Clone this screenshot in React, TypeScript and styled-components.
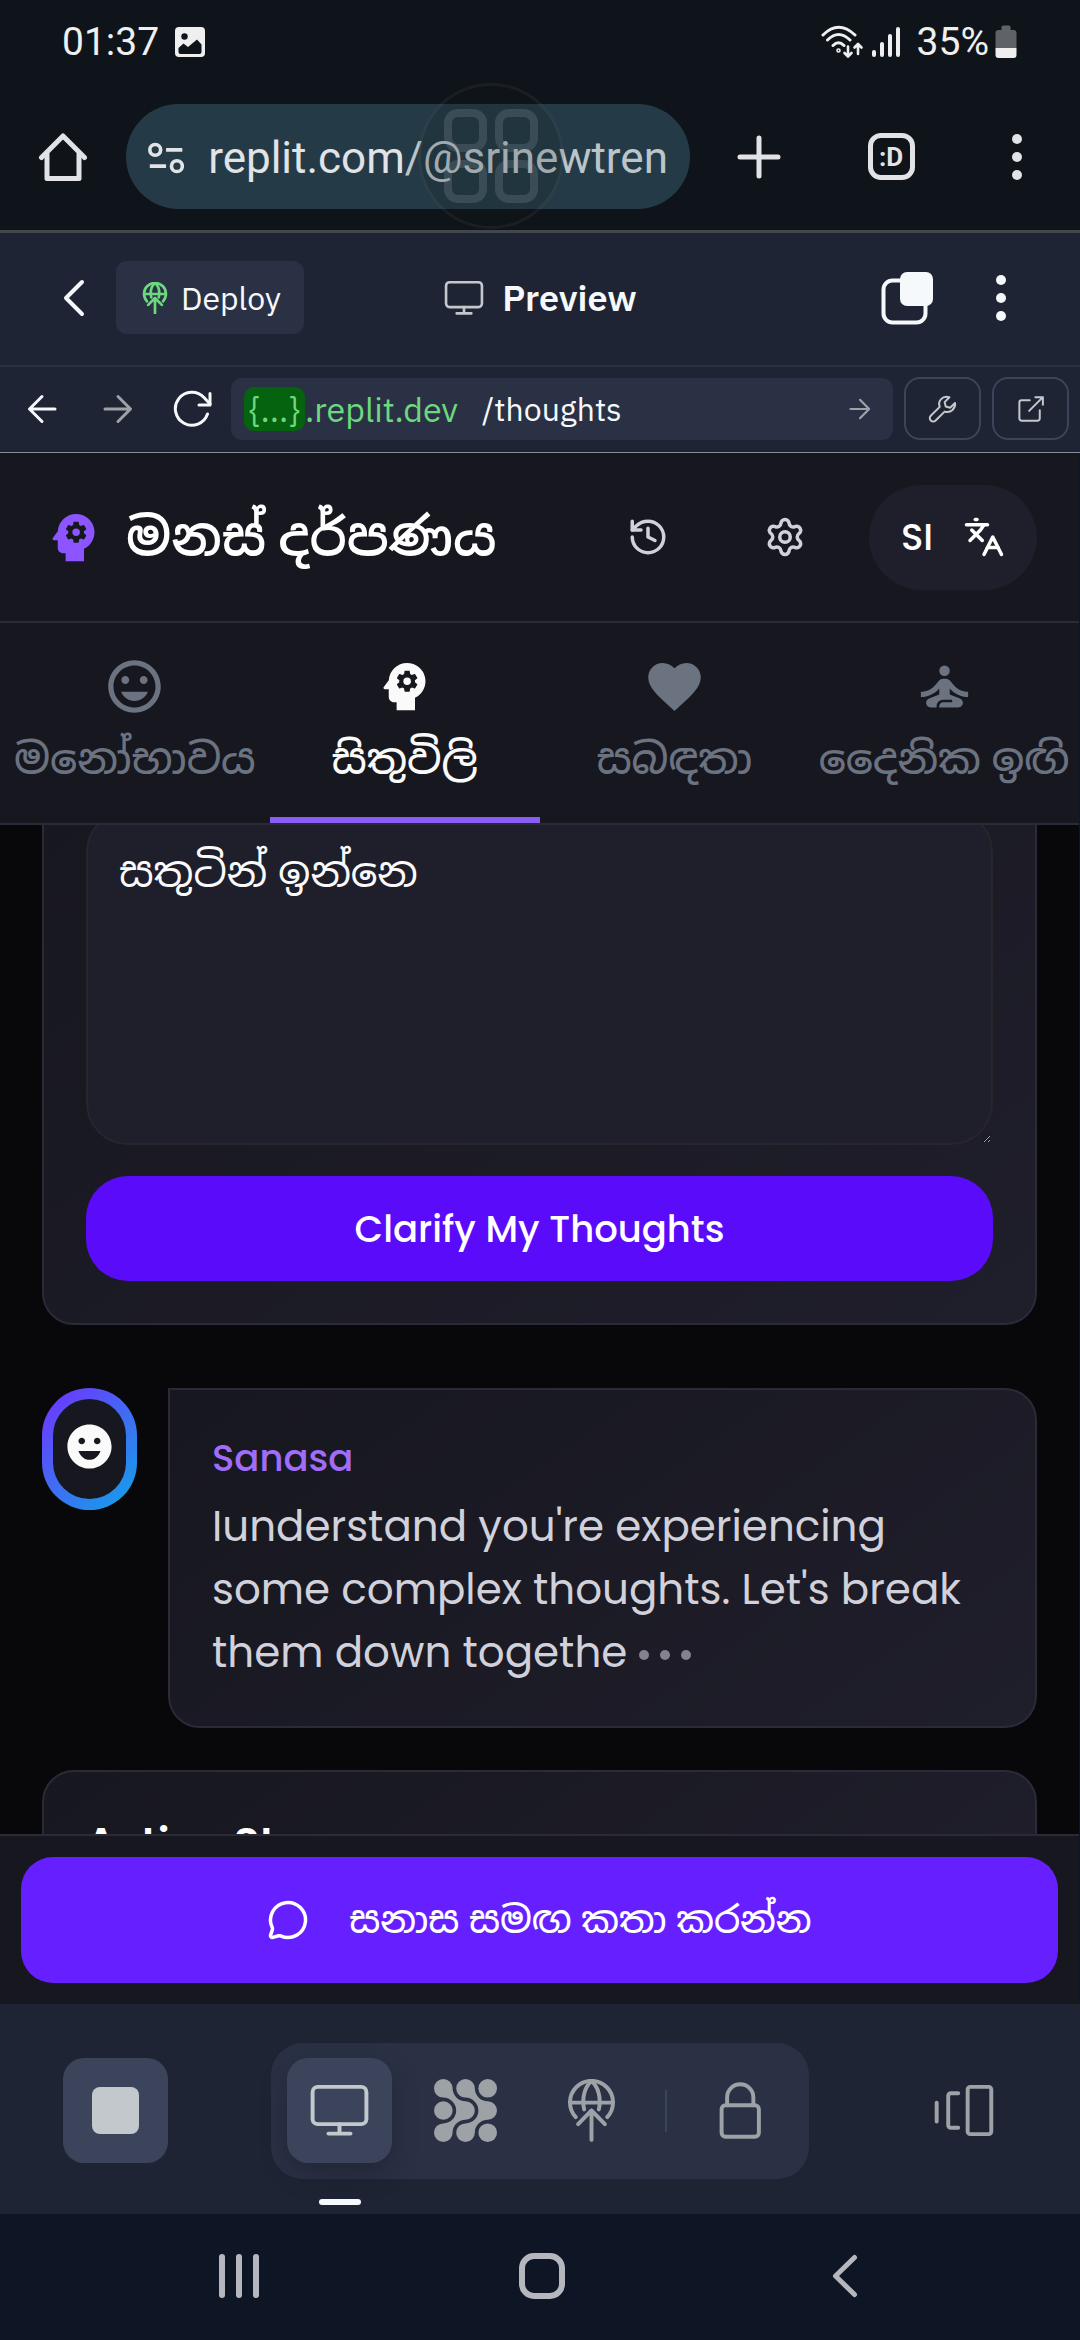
import React, { useLayoutEffect, useRef, useState } from "react";
import styled, { createGlobalStyle, css } from "styled-components";
import { History, Languages, MessageCircle, Settings } from "lucide-react";
import {
  MdEmojiEmotions,
  MdFavorite,
  MdMood,
  MdPsychology,
  MdSelfImprovement,
} from "react-icons/md";

const GlobalStyle = createGlobalStyle`
  * { box-sizing: border-box; }
  body { margin: 0; background: #0e1525; }
  button, input, textarea { font: inherit; color: inherit; margin: 0; }
  button { background: none; border: 0; padding: 0; cursor: pointer; }
`;

const systemFont = `Roboto, sans-serif`;
const workspaceFont = `"IBM Plex Sans", "Noto Sans", sans-serif`;
const appFont = `Poppins, Inter, "Noto Sans Sinhala", "Noto Sans", sans-serif`;

const Screen = styled.div`
  display: flex;
  flex-direction: column;
  height: 100vh;
  overflow: hidden;
  font-family: ${systemFont};
`;

/* ---------- Phone status bar and browser toolbar ---------- */

const BrowserChrome = styled.header`
  position: relative;
  flex: none;
  background: #0f141a;
  border-bottom: 3px solid #41484d;
`;

const StatusBar = styled.div`
  display: flex;
  align-items: center;
  justify-content: space-between;
  height: 83px;
  padding: 0 63px 0 62px;
  color: #efefef;
  font-size: 39px;
  line-height: 48px;
`;

const StatusGroup = styled.div<{ $gap: number }>`
  display: flex;
  align-items: center;
  gap: ${(p) => p.$gap}px;
`;

const Toolbar = styled.div`
  display: flex;
  align-items: center;
  height: 147px;
  color: #e1e3e6;
`;

const ToolbarButton = styled.button<{ $width?: number }>`
  display: flex;
  align-items: center;
  justify-content: center;
  flex: none;
  width: ${(p) => p.$width ?? 126}px;
  height: 105px;
`;

const AddressPill = styled.button`
  display: flex;
  flex: 1;
  align-items: center;
  gap: 24px;
  min-width: 0;
  height: 105px;
  padding: 2px 22px 0;
  border-radius: 53px;
  background: #243b47;
  font-size: 44px;
  white-space: nowrap;
  overflow: hidden;
  color: #e1e3e6;
`;

const AddressPath = styled.span`
  color: #bcc5ca;
`;

const TabCount = styled.span`
  display: flex;
  align-items: center;
  justify-content: center;
  width: 47px;
  height: 47px;
  border: 5px solid currentColor;
  border-radius: 13px;
  font-size: 26px;
  font-weight: 700;
`;

const AssistBubble = styled.div`
  position: absolute;
  top: 83px;
  left: 418px;
  display: grid;
  grid-template-columns: 43px 43px;
  gap: 8px;
  place-content: center;
  width: 146px;
  height: 146px;
  border: 3px solid rgba(255, 255, 255, 0.05);
  border-radius: 50%;
  background: rgba(20, 20, 20, 0.15);
  pointer-events: none;
`;

const AssistTile = styled.span`
  height: 43px;
  border: 8px solid rgba(160, 170, 178, 0.2);
  border-radius: 14px;
`;

/* ---------- Workspace bars ---------- */

const Workspace = styled.div`
  display: flex;
  flex: 1;
  flex-direction: column;
  min-height: 0;
  font-family: ${workspaceFont};
  color: #f5f9fc;
`;

const PaneHeader = styled.div`
  display: grid;
  grid-template-columns: 1fr auto 1fr;
  align-items: center;
  flex: none;
  height: 134px;
  padding: 0 32px 3px;
  background: #1e2433;
  border-bottom: 2px solid #2b3145;
`;

const PaneSide = styled.div<{ $end?: boolean }>`
  display: flex;
  align-items: center;
  justify-content: ${(p) => (p.$end ? "flex-end" : "flex-start")};
`;

const PaneButton = styled.button<{ $width: number }>`
  display: flex;
  align-items: center;
  justify-content: center;
  width: ${(p) => p.$width}px;
  height: 84px;
`;

const DeployButton = styled.button`
  display: flex;
  align-items: center;
  gap: 10px;
  height: 73px;
  padding: 0 23px 0 23px;
  border-radius: 11px;
  background: #2b3145;
  color: #f5f9fc;
  font-size: 32px;
`;

const PaneTitle = styled.h1`
  display: flex;
  align-items: center;
  gap: 17px;
  margin: 0;
  font-size: 36px;
  font-weight: 600;
  line-height: 48px;
`;

const UrlRow = styled.div`
  display: flex;
  align-items: center;
  flex: none;
  height: 86px;
  padding: 0 11px 2px 4px;
  background: #1e2433;
  border-bottom: 1px solid #8b8b93;
`;

const HistoryControls = styled.div`
  display: flex;
  width: 227px;
`;

const HistoryButton = styled.button<{ $dim?: boolean }>`
  display: flex;
  flex: 1;
  align-items: center;
  justify-content: center;
  height: 62px;
  color: ${(p) => (p.$dim ? "#9da2a6" : "#f5f9fc")};
`;

const UrlField = styled.div`
  display: flex;
  flex: 1;
  align-items: center;
  min-width: 0;
  height: 62px;
  padding: 0 22px 0 13px;
  border-radius: 11px;
  background: #2b3145;
  font-size: 32px;
  color: #6cd97e;
`;

const UrlBadge = styled.span`
  display: flex;
  align-items: center;
  justify-content: center;
  width: 61px;
  height: 44px;
  border-radius: 10px;
  background: #056310;
`;

const UrlLabel = styled.label`
  display: flex;
  align-items: center;
  font-size: 34px;
`;

const UrlInput = styled.input`
  flex: 1;
  min-width: 0;
  margin-left: 24px;
  padding: 0;
  border: 0;
  outline: 0;
  background: none;
  color: #f5f9fc;
`;

const GoButton = styled.button`
  display: flex;
  align-items: center;
  color: #9da2a6;
`;

const OutlineButton = styled.button`
  display: flex;
  align-items: center;
  justify-content: center;
  flex: none;
  width: 77px;
  height: 63px;
  margin-left: 11px;
  border: 2px solid #3c445c;
  border-radius: 16px;
  color: #c2c8cc;
`;

/* ---------- Previewed app ---------- */

const AppFrame = styled.div`
  display: flex;
  flex: 1;
  flex-direction: column;
  min-height: 0;
  margin-right: 1px;
  background: #08080a;
  font-family: ${appFont};
  color: #ffffff;
`;

const AppHeader = styled.div`
  display: flex;
  align-items: center;
  flex: none;
  height: 170px;
  padding: 0 42px;
  background: #17171f;
  border-bottom: 2px solid #2a2a38;
`;

const Brand = styled.div`
  display: flex;
  flex: 1;
  align-items: center;
  gap: 21px;
  min-width: 0;
  color: #8c55ff;
`;

const BrandName = styled.h2`
  margin: 0;
  color: #ffffff;
  font-size: 52px;
  font-weight: 600;
  line-height: 74px;
  white-space: nowrap;
`;

const HeaderActions = styled.div`
  display: flex;
  align-items: center;
  gap: 32px;
  color: #d1d1db;
`;

const RoundButton = styled.button`
  display: flex;
  align-items: center;
  justify-content: center;
  width: 105px;
  height: 105px;
`;

const LanguageButton = styled.button`
  display: flex;
  align-items: center;
  justify-content: space-between;
  width: 168px;
  height: 105px;
  padding: 0 32px;
  border-radius: 53px;
  background: #1f1e2b;
  color: #ffffff;
  font-size: 37px;
  font-weight: 500;
`;

const Tabs = styled.nav`
  display: grid;
  grid-template-columns: repeat(4, minmax(0, 1fr));
  flex: none;
  height: 202px;
  background: #17171f;
  border-bottom: 2px solid #2a2a38;
`;

const Tab = styled.button<{ $active: boolean }>`
  display: flex;
  flex-direction: column;
  align-items: center;
  gap: 10px;
  padding-top: 32px;
  border-bottom: 6px solid ${(p) => (p.$active ? "#8b5cf6" : "transparent")};
  color: ${(p) => (p.$active ? "#fafafa" : "#6b7280")};
  font-size: 42px;
  font-weight: 500;
  line-height: 63px;
  white-space: nowrap;
`;

const Feed = styled.main`
  flex: 1;
  min-height: 0;
  padding: 42px;
  overflow-y: auto;
  scrollbar-width: none;
`;

const panel = css`
  padding: 42px;
  border: 2px solid #2a2a38;
  border-radius: 32px;
  background: linear-gradient(145deg, #17171f, #1f1e2b);
`;

const ThoughtForm = styled.form`
  ${panel}
  display: flex;
  flex-direction: column;
  gap: 31px;
  margin-bottom: 63px;
`;

const ThoughtInput = styled.textarea`
  display: block;
  width: 100%;
  height: 335px;
  padding: 31px;
  border: 2px solid #26262b;
  border-radius: 42px;
  outline: 0;
  background: #1f1e2b;
  color: #fafafa;
  font-size: 42px;
  line-height: 60px;
  resize: vertical;
`;

const ClarifyButton = styled.button`
  height: 105px;
  border-radius: 42px;
  background: #5a0cfa;
  color: #ffffff;
  font-size: 37px;
  font-weight: 500;
`;

const Reply = styled.article`
  display: flex;
  align-items: flex-start;
  gap: 31px;
  margin-bottom: 42px;
`;

const Avatar = styled.div`
  flex: none;
  padding: 11px;
  border-radius: 48px;
  background: linear-gradient(135deg, #7430ff, #0ea5e9);
`;

const AvatarFace = styled.div`
  display: flex;
  align-items: center;
  justify-content: center;
  width: 73px;
  height: 100px;
  padding-bottom: 6px;
  border-radius: 37px;
  background: #17171f;
  color: #fafafa;
`;

const Bubble = styled.div`
  ${panel}
  flex: 1;
  min-width: 0;
  border-top-left-radius: 0;
`;

const Speaker = styled.h3`
  margin: 0 0 10px;
  color: #a06cf8;
  font-size: 37px;
  font-weight: 500;
  line-height: 53px;
`;

const Message = styled.p`
  margin: 0;
  color: #d1d1db;
  font-size: 42px;
  line-height: 63px;
`;

const Typing = styled.span`
  display: inline-flex;
  gap: 11px;
  margin-left: 12px;
  vertical-align: middle;
`;

const TypingDot = styled.span`
  width: 10px;
  height: 10px;
  border-radius: 50%;
  background: #83838f;
`;

const StepsCard = styled.section`
  ${panel}
`;

const StepsTitle = styled.h3`
  margin: 0;
  font-size: 42px;
  font-weight: 600;
  line-height: 60px;
`;

const ChatBar = styled.div`
  flex: none;
  padding: 21px;
  background: #17171f;
  border-top: 2px solid #2a2a38;
`;

const ChatButton = styled.button`
  display: flex;
  align-items: center;
  justify-content: center;
  gap: 40px;
  width: 100%;
  height: 126px;
  border-radius: 32px;
  background: #661fff;
  color: #ffffff;
  font-size: 37px;
  font-weight: 500;
`;

/* ---------- Workspace dock and phone navigation ---------- */

const Dock = styled.div`
  display: flex;
  align-items: center;
  justify-content: space-between;
  flex: none;
  height: 210px;
  padding: 3px 63px 0;
  background: #1e2433;
`;

const DockGroup = styled.div`
  display: flex;
  align-items: center;
  gap: 21px;
  height: 136px;
  padding: 0 16px;
  border-radius: 32px;
  background: #2b3145;
`;

const DockButton = styled.button<{ $filled?: boolean; $active?: boolean }>`
  position: relative;
  display: flex;
  align-items: center;
  justify-content: center;
  width: 105px;
  height: 105px;
  border-radius: 21px;
  color: ${(p) => (p.$filled || p.$active ? "#c2c8cc" : "#9da2a6")};
  background: ${(p) => (p.$filled || p.$active ? "#3c445c" : "transparent")};

  ${(p) =>
    p.$active &&
    css`
      box-shadow: 0 10px 24px rgba(20, 24, 36, 0.4);

      &::after {
        content: "";
        position: absolute;
        bottom: -42px;
        width: 42px;
        height: 6px;
        border-radius: 3px;
        background: #f5f9fc;
      }
    `}
`;

const DockDivider = styled.span`
  width: 2px;
  height: 42px;
  background: #3c445c;
`;

const StopMark = styled.span`
  width: 47px;
  height: 47px;
  border-radius: 8px;
  background: currentColor;
`;

const SystemNav = styled.nav`
  display: grid;
  grid-template-columns: repeat(3, 303px);
  justify-content: center;
  align-items: center;
  flex: none;
  height: 126px;
  padding: 0 0 3px 3px;
  background: #0e1525;
  color: #b6b7be;
`;

const SystemButton = styled.button`
  display: flex;
  align-items: center;
  justify-content: center;
  height: 105px;
`;

/* ---------- Drawings ---------- */

type LineProps = {
  w: number;
  h?: number;
  box: string;
  stroke?: number;
  round?: boolean;
  children: React.ReactNode;
};

const Line = ({ w, h = w, box, stroke = 2, round = true, children }: LineProps) => (
  <svg
    width={w}
    height={h}
    viewBox={box}
    fill="none"
    stroke="currentColor"
    strokeWidth={stroke}
    strokeLinecap={round ? "round" : "butt"}
    strokeLinejoin={round ? "round" : "miter"}
    aria-hidden="true"
  >
    {children}
  </svg>
);

const PictureIcon = () => (
  <svg width="30" height="30" viewBox="0 0 30 30" aria-hidden="true">
    <rect width="30" height="30" rx="4" fill="currentColor" />
    <circle cx="9.5" cy="9.5" r="3.2" fill="#0f141a" />
    <path d="M3.5 21 8.5 16.5 13 20 22 12.5 26.5 17.5V25a2 2 0 0 1-2 2h-19a2 2 0 0 1-2-2Z" fill="#0f141a" />
  </svg>
);

const WifiIcon = () => (
  <Line w={44} h={34} box="0 0 44 34" stroke={3}>
    <path d="M2 10Q17.5-5.500 34 10M6.500 15Q17.500 4 29 15M12 20.500Q17.500 15 23 20.500" />
    <circle cx="17.500" cy="25.500" r="0.800" />
    <path d="M27 21.500v9.500M23.500 28l3.500 3.500 3.500-3.500M37 29v-9.500M33.500 22.500l3.500-3.500 3.500 3.500" strokeWidth="2.600" />
  </Line>
);

const SignalIcon = () => (
  <Line w={30} h={32} box="0 0 30 32" stroke={4}>
    <path d="M3 26v3M11 18v11M19 10v19M27 3v26" />
  </Line>
);

const BatteryIcon = () => (
  <svg width="22" height="33" viewBox="0 0 22 33" aria-hidden="true">
    <path d="M6.500 5V2a1.500 1.500 0 0 1 1.500-1.500h6a1.500 1.500 0 0 1 1.500 1.500v3h3a3 3 0 0 1 3 3v15H.5V8a3 3 0 0 1 3-3Z" fill="#5f6266" />
    <path d="M.5 23h21v7a3 3 0 0 1-3 3h-15a3 3 0 0 1-3-3Z" fill="#efefef" />
  </svg>
);

const HomeIcon = () => (
  <Line w={50} h={50} box="0 0 50 50" stroke={5}>
    <path d="M3.500 25.500 25 4l21.500 21.500" />
    <path d="M9 22v24.500h32V22" />
  </Line>
);

const TuneIcon = () => (
  <Line w={40} h={34} box="0 0 40 34" stroke={4} round={false}>
    <circle cx="8" cy="8" r="6" />
    <path d="M20 8h18M2 26h18" />
    <circle cx="32" cy="26" r="6" />
  </Line>
);

const PlusIcon = () => (
  <Line w={44} h={44} box="0 0 44 44" stroke={5}>
    <path d="M22 3v38M3 22h38" />
  </Line>
);

const DotsIcon = ({ r }: { r: number }) => (
  <svg width="12" height="48" viewBox="0 0 12 48" fill="currentColor" aria-hidden="true">
    <circle cx="6" cy={r + 1} r={r} />
    <circle cx="6" cy="24" r={r} />
    <circle cx="6" cy={47 - r} r={r} />
  </svg>
);

const DeployIcon = ({ size, stroke, color = "currentColor" }: { size: number; stroke: number; color?: string }) => (
  <Line w={size} box="0 0 24 24" stroke={stroke}>
    <g stroke={color}>
      <path d="M6 14.500a8.200 8.200 0 1 1 12 0M3.800 9h16.400" />
      <path d="M12 .8C9.500 3 8.200 7 9.200 11.600M12 .8c2.500 2.200 3.800 6.200 2.800 10.800" />
      <path d="M12 23.200V12M6.900 17.200 12 12l5.100 5.200" />
    </g>
  </Line>
);

const MonitorIcon = ({ size }: { size: number }) => (
  <Line w={size} box="0 0 24 24" stroke={1.5}>
    <g stroke="#c2c8cc">
      <rect x="1.750" y="3" width="20.500" height="14.200" rx="2" />
      <path d="M12 17.200V20.800M7.800 20.800h8.400" />
    </g>
  </Line>
);

const ChevronIcon = () => (
  <Line w={24} h={40} box="0 0 24 40" stroke={4}>
    <path d="M20 4 4 20l16 16" />
  </Line>
);

const LayersIcon = () => (
  <svg width="54" height="54" viewBox="0 0 54 54" aria-hidden="true">
    <rect x="3.500" y="9.500" width="42" height="42" rx="9" fill="none" stroke="currentColor" strokeWidth="4" />
    <rect x="20" y="1" width="33" height="34" rx="7" fill="currentColor" />
  </svg>
);

const ModulesIcon = () => {
  const chain =
    "M18.600 9.300A12.900 12.900 0 0 0 31.500 22.200A9.300 9.300 0 0 1 31.500 40.800A12.900 12.900 0 0 0 18.600 53.700A9.300 9.300 0 1 1 9.300 44.400A12.900 12.900 0 0 0 9.300 18.600A9.300 9.300 0 1 1 18.600 9.300Z";
  return (
    <svg width="63" height="63" viewBox="0 0 63 63" fill="currentColor" aria-hidden="true">
      <path d={chain} />
      <path d={chain} transform="translate(22.200 0)" />
      <circle cx="9.300" cy="31.500" r="9.300" />
      <circle cx="53.700" cy="9.300" r="9.300" />
      <circle cx="53.700" cy="53.700" r="9.300" />
    </svg>
  );
};

const LockIcon = () => (
  <Line w={63} box="0 0 24 24" stroke={1.5}>
    <rect x="4.800" y="10" width="14.200" height="12" rx="1.500" />
    <path d="M6.900 10V7a5 5 0 0 1 10 0v3" />
  </Line>
);

const CarouselIcon = () => (
  <Line w={63} box="0 0 24 24" stroke={1.5}>
    <rect x="13.200" y="3" width="9" height="18" rx="1" />
    <path d="M9.600 5.400H6.800a1 1 0 0 0-1 1v11.200a1 1 0 0 0 1 1h2.800M1.400 9v7.200" />
  </Line>
);

const WrenchIcon = () => (
  <Line w={30} box="0 0 24 24" stroke={1.6}>
    <path d="M21.600 7.200 17.700 11l-3.500-1-.9-3.500 3.800-3.900c-2.400-.8-5-.3-6.600 1.500-1.600 1.700-2 4-1.100 6.200L2.200 17.400a2.650 2.650 0 0 0 3.900 3.800l7.200-7.100c2.200.7 4.600.3 6.300-1.300 1.600-1.600 2.400-3.500 2-5.600Z" />
  </Line>
);

const ExternalIcon = () => (
  <Line w={30} box="0 0 24 24" stroke={1.6}>
    <path d="M11 5H4.500A1.800 1.800 0 0 0 2.700 6.800v12.700a1.800 1.800 0 0 0 1.800 1.800h12.700a1.800 1.800 0 0 0 1.800-1.800V13M15.500 2.500h6v6M21.500 2.500 10.500 13.500" />
  </Line>
);

const ArrowIcon = ({ size, back }: { size: number; back?: boolean }) => (
  <Line w={size} box="0 0 30 30" stroke={3}>
    <path d={back ? "M28 15H2.500M15 2.500 2.500 15 15 27.500" : "M2 15h25.500M15 2.500 27.500 15 15 27.500"} />
  </Line>
);

const ReloadIcon = () => (
  <Line w={40} h={38} box="0 0 40 38" stroke={3}>
    <path d="M34.500 24A16.500 16.500 0 1 1 31 7.500L37 14" />
    <path d="M37 3.500V15H26" />
  </Line>
);

/* ---------- Page ---------- */

const tabs = [
  { id: "mood", label: "මනෝභාවය", Icon: MdMood },
  { id: "thoughts", label: "සිතුවිලි", Icon: MdPsychology },
  { id: "relations", label: "සබඳතා", Icon: MdFavorite },
  { id: "tips", label: "දෛනික ඉඟි", Icon: MdSelfImprovement },
];

const FEED_SCROLL = 101;

export default function App() {
  const feed = useRef<HTMLElement>(null);
  const [active, setActive] = useState("thoughts");
  const [thought, setThought] = useState("සතුටින් ඉන්නෙ");
  const [path, setPath] = useState("/thoughts");

  useLayoutEffect(() => {
    if (feed.current) feed.current.scrollTop = FEED_SCROLL;
  }, []);

  return (
    <Screen>
      <GlobalStyle />

      <BrowserChrome>
        <StatusBar>
          <StatusGroup $gap={16}>
            <span>01:37</span>
            <PictureIcon />
          </StatusGroup>
          <StatusGroup $gap={6}>
            <WifiIcon />
            <SignalIcon />
            <StatusGroup $gap={6}>
              <span>&nbsp;35%</span>
              <BatteryIcon />
            </StatusGroup>
          </StatusGroup>
        </StatusBar>
        <Toolbar>
          <ToolbarButton aria-label="Home"><HomeIcon /></ToolbarButton>
          <AddressPill>
            <TuneIcon />
            <span>replit.com<AddressPath>/@srinewtren</AddressPath></span>
          </AddressPill>
          <ToolbarButton $width={138} aria-label="New tab"><PlusIcon /></ToolbarButton>
          <ToolbarButton aria-label="Open tabs"><TabCount>:D</TabCount></ToolbarButton>
          <ToolbarButton aria-label="Menu"><DotsIcon r={5} /></ToolbarButton>
        </Toolbar>
        <AssistBubble>
          <AssistTile /><AssistTile /><AssistTile /><AssistTile />
        </AssistBubble>
      </BrowserChrome>

      <Workspace>
        <PaneHeader>
          <PaneSide>
            <PaneButton $width={84} aria-label="Back"><ChevronIcon /></PaneButton>
            <DeployButton>
              <DeployIcon size={32} stroke={2} color="#6cd97e" />
              Deploy
            </DeployButton>
          </PaneSide>
          <PaneTitle>
            <MonitorIcon size={42} />
            Preview
          </PaneTitle>
          <PaneSide $end>
            <PaneButton $width={94} aria-label="Tabs"><LayersIcon /></PaneButton>
            <PaneButton $width={94} aria-label="More"><DotsIcon r={5} /></PaneButton>
          </PaneSide>
        </PaneHeader>

        <UrlRow>
          <HistoryControls>
            <HistoryButton aria-label="Back"><ArrowIcon size={30} back /></HistoryButton>
            <HistoryButton $dim aria-label="Forward"><ArrowIcon size={30} /></HistoryButton>
            <HistoryButton aria-label="Reload"><ReloadIcon /></HistoryButton>
          </HistoryControls>
          <UrlField>
            <UrlLabel htmlFor="path"><UrlBadge>{"{...}"}</UrlBadge>.replit.dev</UrlLabel>
            <UrlInput id="path" value={path} onChange={(e) => setPath(e.target.value)} />
            <GoButton aria-label="Go"><ArrowIcon size={22} /></GoButton>
          </UrlField>
          <OutlineButton aria-label="Developer tools"><WrenchIcon /></OutlineButton>
          <OutlineButton aria-label="Open in new tab"><ExternalIcon /></OutlineButton>
        </UrlRow>

        <AppFrame>
          <AppHeader>
            <Brand>
              <MdPsychology size={63} />
              <BrandName>මනස් දර්පණය</BrandName>
            </Brand>
            <HeaderActions>
              <RoundButton aria-label="History"><History size={42} /></RoundButton>
              <RoundButton aria-label="Settings"><Settings size={42} /></RoundButton>
              <LanguageButton>
                SI
                <Languages size={42} />
              </LanguageButton>
            </HeaderActions>
          </AppHeader>

          <Tabs>
            {tabs.map(({ id, label, Icon }) => (
              <Tab key={id} $active={id === active} onClick={() => setActive(id)}>
                <Icon size={63} />
                {label}
              </Tab>
            ))}
          </Tabs>

          <Feed ref={feed}>
            <ThoughtForm onSubmit={(e) => e.preventDefault()}>
              <ThoughtInput
                aria-label="Thought"
                value={thought}
                onChange={(e) => setThought(e.target.value)}
              />
              <ClarifyButton type="submit">Clarify My Thoughts</ClarifyButton>
            </ThoughtForm>

            <Reply>
              <Avatar>
                <AvatarFace><MdEmojiEmotions size={53} /></AvatarFace>
              </Avatar>
              <Bubble>
                <Speaker>Sanasa</Speaker>
                <Message>
                  Iunderstand you're experiencing some complex thoughts. Let's break them down togethe
                  <Typing><TypingDot /><TypingDot /><TypingDot /></Typing>
                </Message>
              </Bubble>
            </Reply>

            <StepsCard>
              <StepsTitle>Action Steps</StepsTitle>
            </StepsCard>
          </Feed>

          <ChatBar>
            <ChatButton>
              <MessageCircle size={42} />
              සනාස සමඟ කතා කරන්න
            </ChatButton>
          </ChatBar>
        </AppFrame>

        <Dock>
          <DockButton $filled aria-label="Stop"><StopMark /></DockButton>
          <DockGroup>
            <DockButton $active aria-label="Preview"><MonitorIcon size={63} /></DockButton>
            <DockButton aria-label="Modules"><ModulesIcon /></DockButton>
            <DockButton aria-label="Deployments"><DeployIcon size={63} stroke={1.5} /></DockButton>
            <DockDivider />
            <DockButton aria-label="Secrets"><LockIcon /></DockButton>
          </DockGroup>
          <DockButton aria-label="Switch pane"><CarouselIcon /></DockButton>
        </Dock>
      </Workspace>

      <SystemNav>
        <SystemButton aria-label="Recent apps">
          <Line w={42} h={46} box="0 0 42 46" stroke={6}>
            <path d="M4 4v38M21 4v38M38 4v38" />
          </Line>
        </SystemButton>
        <SystemButton aria-label="Home screen">
          <Line w={48} h={48} box="0 0 48 48" stroke={6}>
            <rect x="4" y="4" width="40" height="40" rx="12" />
          </Line>
        </SystemButton>
        <SystemButton aria-label="Go back">
          <Line w={28} h={46} box="0 0 28 46" stroke={5}>
            <path d="M23.500 4.500 4.500 23l19 18.500" />
          </Line>
        </SystemButton>
      </SystemNav>
    </Screen>
  );
}
